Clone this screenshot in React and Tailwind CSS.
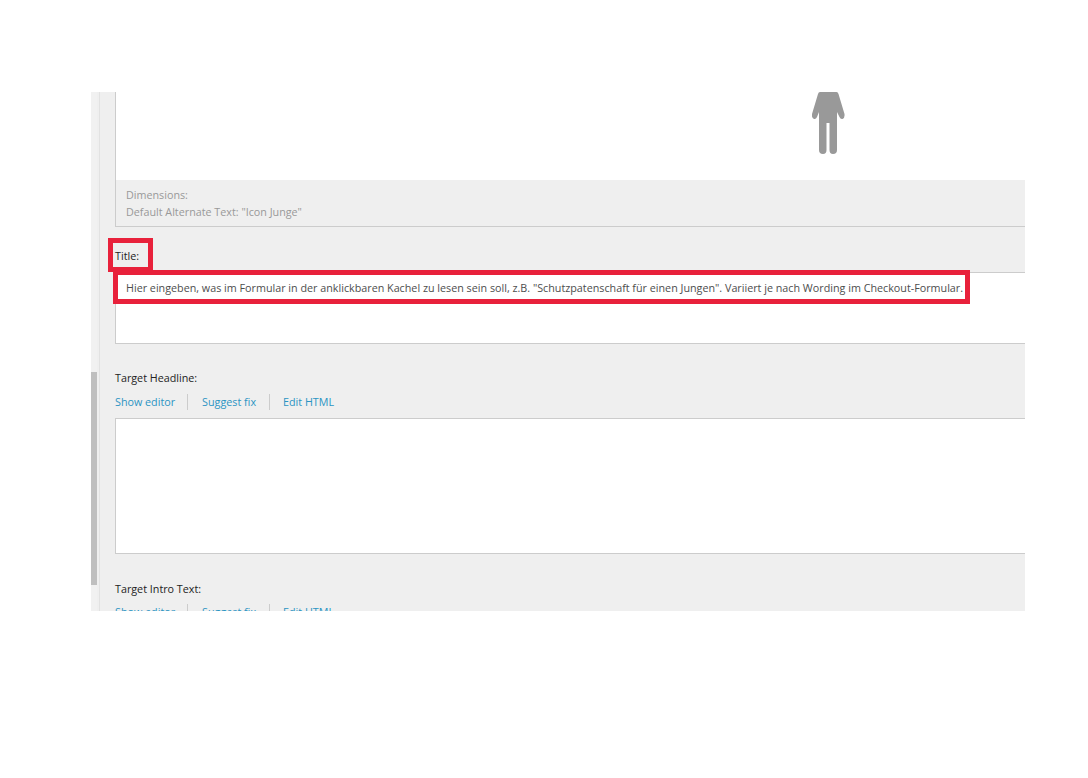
import React from "react";

const font = { fontFamily: '"Open Sans", sans-serif' };

const EditorLinks = () => (
  <div className="flex items-center h-[16px] text-[10.75px] text-[#2b94c3]">
    <a className="pr-[12px] border-r border-[#cccccc]">Show editor</a>
    <a className="pl-[14px] pr-[13px] border-r border-[#cccccc]">Suggest fix</a>
    <a className="pl-[13px]">Edit HTML</a>
  </div>
);

const PersonIcon = () => (
  <svg width="33" height="62" viewBox="0 0 33 62" className="block">
    <path
      fill="#999999"
      d="M8 0H24.5Q26 0 26.5 2L32.5 22Q33 26 30.5 27Q28.5 27.5 27.5 25L25 20V58Q25 62 21 62Q17.5 62 17.5 58V31H14.5V58Q14.5 62 11 62Q7 62 7 58V20L5 25Q4 27.5 2 27Q-.6 26 0 22L6 2Q6.5 0 8 0Z"
    />
  </svg>
);

const App = () => {
  return (
    <div className="relative w-[1088px] h-[778px] bg-white pt-[92px] pl-[91px]" style={font}>
      <div className="flex w-[934px] h-[519px] overflow-hidden bg-[#efefef]">
        {/* scrollbar */}
        <div className="w-[6px] shrink-0 bg-[#f1f1f1] pt-[280px]">
          <div className="h-[213px] bg-[#bfbfbf]"></div>
        </div>
        <div className="w-[3px] shrink-0 border-r border-[#e2e2e2]"></div>

        <div className="flex-1 min-w-0 pl-[15px]">
          {/* image field */}
          <div className="border-l border-b border-[#cccccc] h-[135px]">
            <div className="h-[88px] bg-white pl-[696px]">
              <PersonIcon />
            </div>
            <div className="pt-[7px] pl-[10px] text-[10.75px] leading-[17px] text-[#999999]">
              <p>Dimensions:</p>
              <p>Default Alternate Text: "Icon Junge"</p>
            </div>
          </div>

          {/* title */}
          <p className="mt-[21px] h-[16px] text-[10.75px] leading-[16px] text-[#222222]">Title:</p>
          <div className="mt-[8px] w-[920px] h-[72px] bg-white border-l border-t border-b border-[#cccccc] pl-[10px] pt-[7px] text-[10.75px] leading-[16px] text-[#4d4d4d] whitespace-nowrap">
            Hier eingeben, was im Formular in der anklickbaren Kachel zu lesen sein soll, z.B. "Schutzpatenschaft für einen Jungen". Variiert je nach Wording im Checkout-Formular.
          </div>

          {/* target headline */}
          <p className="mt-[26px] h-[16px] text-[10.75px] leading-[16px] text-[#222222]">Target Headline:</p>
          <div className="mt-[8px]">
            <EditorLinks />
          </div>
          <div className="mt-[8px] w-[920px] h-[136px] bg-white border-l border-t border-b border-[#cccccc]"></div>

          {/* target intro text */}
          <p className="mt-[27px] h-[16px] text-[10.75px] leading-[16px] text-[#222222]">Target Intro Text:</p>
          <div className="mt-[7px]">
            <EditorLinks />
          </div>
        </div>
      </div>

      {/* red highlight boxes */}
      <div className="absolute left-[108px] top-[238px] w-[45px] h-[34px] border-[5px] border-[#e8213b]"></div>
      <div className="absolute left-[113px] top-[270px] w-[857px] h-[34px] border-[5px] border-[#e8213b]"></div>
    </div>
  );
};

export default App;
